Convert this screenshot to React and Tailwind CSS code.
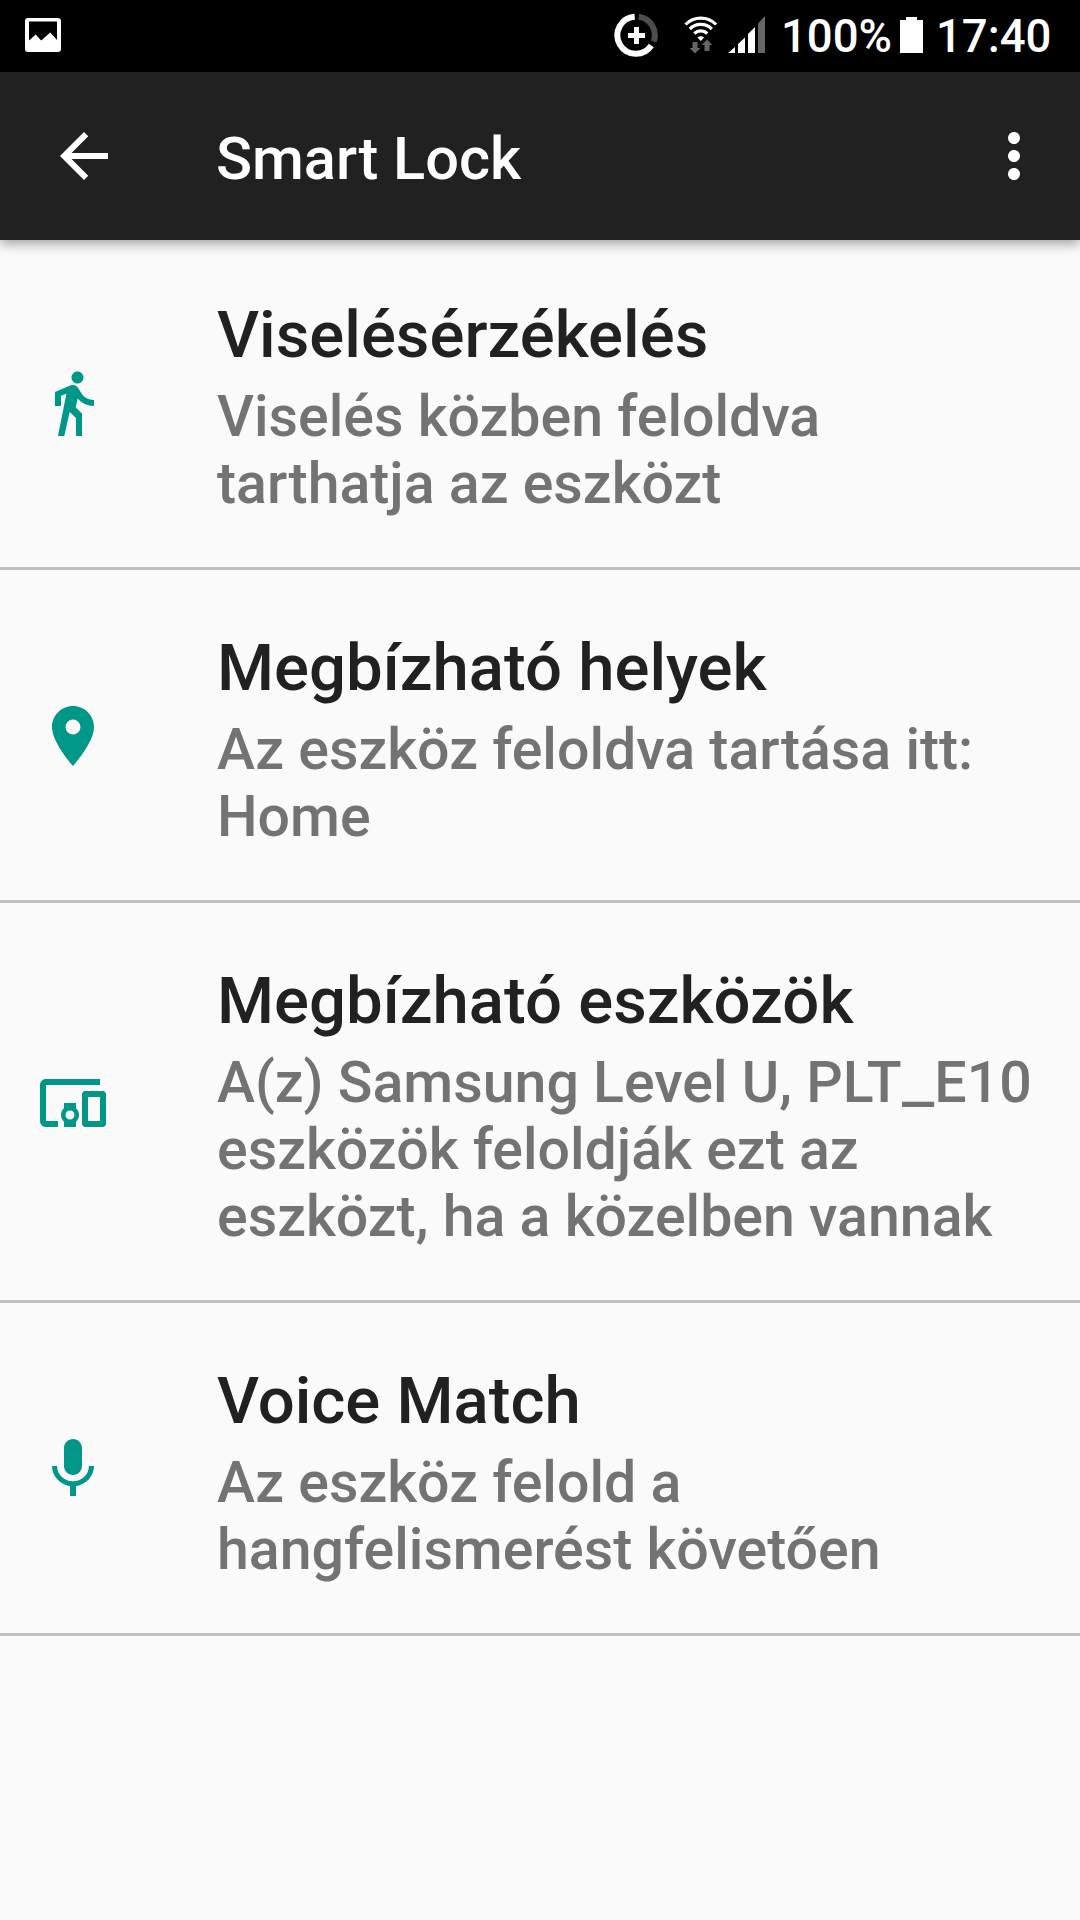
/**
 * Smart Lock settings screen
 * Status bar, app bar and the list of unlock methods
 */

import { MdArrowBack, MdDevicesOther, MdDirectionsWalk, MdMoreVert, MdPlace } from "react-icons/md"

function MicIcon({ className }) {
  return (
    <svg viewBox="0 0 24 24" fill="currentColor" className={className}>
      <path d="M12 14c1.66 0 2.99-1.34 2.99-3L15 5c0-1.66-1.34-3-3-3S9 3.34 9 5v6c0 1.66 1.34 3 3 3z
               m5.3-3c0 3-2.54 5.1-5.3 5.1S6.7 14 6.7 11H5c0 3.41 2.72 6.23 6 6.72V21h2v-3.28
               c3.28-.48 6-3.3 6-6.72h-1.7z" />
    </svg>
  )
}

const items = [
  {
    icon: MdDirectionsWalk,
    title: "Viselésérzékelés",
    lines: ["Viselés közben feloldva", "tarthatja az eszközt"],
  },
  {
    icon: MdPlace,
    title: "Megbízható helyek",
    lines: ["Az eszköz feloldva tartása itt:", "Home"],
  },
  {
    icon: MdDevicesOther,
    title: "Megbízható eszközök",
    lines: [
      // wide underscore
      <>A(z) Samsung Level U, PLT<span className="mr-[7px] inline-block origin-left scale-x-[1.26]">_</span>E10</>,
      "eszközök feloldják ezt az",
      "eszközt, ha a közelben vannak",
    ],
  },
  {
    icon: MicIcon,
    title: "Voice Match",
    lines: ["Az eszköz felold a", "hangfelismerést követően"],
  },
]

function StatusBar() {
  return (
    <div className="flex h-[72px] items-start bg-black text-white">
      {/* screenshot notification */}
      <svg viewBox="0 0 36 34" className="mt-[18px] ml-[25px] h-[34px] w-9">
        <path
          fill="currentColor"
          fillRule="evenodd"
          d="M3 0h30a3 3 0 0 1 3 3v28a3 3 0 0 1-3 3H3a3 3 0 0 1-3-3V3a3 3 0 0 1 3-3z
             M4 3.5v19L10.700 16.500l5.500 6L25.300 14.500 32 22V3.500z"
        />
      </svg>

      {/* data saver */}
      <svg viewBox="0 0 44 44" className="mt-[13px] ml-[553px] h-11 w-11" fill="none">
        <path d="M20.700 3.800A18.500 18.500 0 1 0 37.300 32.500" stroke="#fff" strokeWidth="6" />
        <path d="M24.700 3.800A18.500 18.500 0 0 1 39.700 28.500" stroke="#4d4d4d" strokeWidth="6" />
        <path d="M22.500 14v17M14 22.500h17" stroke="#fff" strokeWidth="5" />
      </svg>

      {/* wifi with traffic arrows */}
      <svg viewBox="0 0 34 40" className="mt-[15px] ml-[26px] h-10 w-[34px]">
        <g fill="none" stroke="#fff" strokeWidth="3.200">
          <path d="M1.500 9.500a21.500 21.500 0 0 1 30.600 0" />
          <path d="M5.800 14a15.500 15.500 0 0 1 22 0" />
          <path d="M10.300 18.500a9.300 9.300 0 0 1 13 0" />
        </g>
        <path fill="#fff" d="M13.500 22.500q3.300-2.600 6.600 0L16.800 26z" />
        <path fill="#666" d="M8.500 27h5v6h3l-5.500 5.500L5.500 33h3z" />
        <path fill="#666" d="M20.500 36h5v-6h3L23 24.500 17.500 30h3z" />
      </svg>

      {/* signal strength */}
      <svg viewBox="0 0 37 37" className="mt-4 ml-[10px] h-[37px] w-[37px]">
        <path fill="#fff" d="M0 37l7-6v6zM10 28l7-6.500V37h-7zM20 18l7-7v26h-7z" />
        <path fill="#666" d="M30 7.500L37 0v37h-7z" />
      </svg>

      <span className="mt-[10px] ml-4 w-[114px] text-[45.5px] leading-[53px] font-medium whitespace-nowrap">100%</span>

      <svg viewBox="0 0 23 36" className="mt-[17px] ml-[5px] h-9 w-[23px]">
        <path fill="#fff" d="M6 0h11v3h6v33H0V3h6z" />
      </svg>

      <span className="mt-[10px] ml-[13px] text-[45.5px] leading-[53px] font-medium whitespace-nowrap">17:40</span>
    </div>
  )
}

function AppBar() {
  return (
    <header className="relative z-10 flex h-[168px] items-center bg-[#212121] pr-[30px] pl-12 text-white shadow-[0_3px_12px_rgba(0,0,0,0.4)]">
      <button aria-label="Back">
        <MdArrowBack className="size-[72px]" />
      </button>
      <h1 className="mt-[5px] ml-24 grow text-[59.5px] leading-[70px] font-medium">Smart Lock</h1>
      <button aria-label="More options">
        <MdMoreVert className="size-[72px]" />
      </button>
    </header>
  )
}

function SettingRow({ item }) {
  const Icon = item.icon
  return (
    <li className="flex items-center border-b-3 border-[#c0c0c0] pt-[60px] pb-[50px] pl-[37px]">
      <Icon className="mb-2 size-[72px] shrink-0 text-[#009688]" />
      <div className="ml-[108px] font-medium whitespace-nowrap">
        <h2 className="text-[65.25px] leading-[76px] text-[#212121]">{item.title}</h2>
        <p className="mt-[10px] text-[57.25px] leading-[67px] text-[#737373]">
          {item.lines.map((line, i) => (
            <span key={i} className="block">{line}</span>
          ))}
        </p>
      </div>
    </li>
  )
}

export default function App() {
  return (
    <div className="h-[1920px] w-[1080px] overflow-hidden bg-[#fafafa] font-[Roboto,sans-serif]">
      <StatusBar />
      <AppBar />
      <ul className="-mt-[3px]">
        {items.map((item) => (
          <SettingRow key={item.title} item={item} />
        ))}
      </ul>
    </div>
  )
}
